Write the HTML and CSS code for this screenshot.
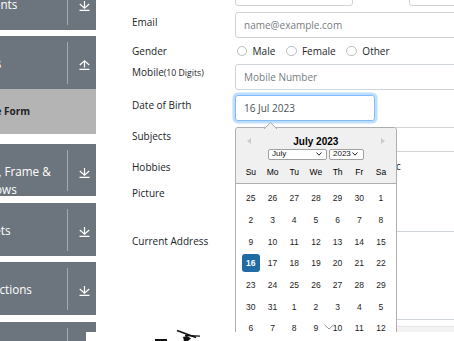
FILE: index.html
```html
<!DOCTYPE html>
<html lang="en">
<head>
<meta charset="utf-8">
<title>Practice Form</title>
<link rel="stylesheet" href="styles.css">
</head>
<body>
<div class="page">
  <aside class="sidebar">
    <div class="group">
      <div class="group-header">
        <div class="group-title">Elements</div>
        <span class="group-sep"></span>
        <div class="group-icon"><svg width="11" height="10" viewBox="0 0 11 10"><path d="M5.5 0V7M0.8 3L5.5 7.2L10.2 3M0.5 9.3H10.5" fill="none" stroke="#fff" stroke-width="1.2"/></svg></div>
      </div>
    </div>
    <div class="group group-open">
      <div class="group-header">
        <div class="group-title">Forms</div>
        <span class="group-sep"></span>
        <div class="group-icon"><svg width="11" height="10" viewBox="0 0 11 10"><path d="M5.5 0.8V7.6M0.8 5L5.5 0.8L10.2 5M0.5 9.3H10.5" fill="none" stroke="#fff" stroke-width="1.2"/></svg></div>
      </div>
      <div class="menu-item">Practice Form</div>
    </div>
    <div class="group">
      <div class="group-header">
        <div class="group-title">Alerts, Frame &amp; Windows</div>
        <span class="group-sep"></span>
        <div class="group-icon"><svg width="11" height="10" viewBox="0 0 11 10"><path d="M5.5 0V7M0.8 3L5.5 7.2L10.2 3M0.5 9.3H10.5" fill="none" stroke="#fff" stroke-width="1.2"/></svg></div>
      </div>
    </div>
    <div class="group">
      <div class="group-header">
        <div class="group-title">Widgets</div>
        <span class="group-sep"></span>
        <div class="group-icon"><svg width="11" height="10" viewBox="0 0 11 10"><path d="M5.5 0V7M0.8 3L5.5 7.2L10.2 3M0.5 9.3H10.5" fill="none" stroke="#fff" stroke-width="1.2"/></svg></div>
      </div>
    </div>
    <div class="group">
      <div class="group-header">
        <div class="group-title">Interactions</div>
        <span class="group-sep"></span>
        <div class="group-icon"><svg width="11" height="10" viewBox="0 0 11 10"><path d="M5.5 0V7M0.8 3L5.5 7.2L10.2 3M0.5 9.3H10.5" fill="none" stroke="#fff" stroke-width="1.2"/></svg></div>
      </div>
    </div>
    <div class="group">
      <div class="group-header">
        <div class="group-title">Book Store Application</div>
        <span class="group-sep"></span>
        <div class="group-icon"><svg width="11" height="10" viewBox="0 0 11 10"><path d="M5.5 0V7M0.8 3L5.5 7.2L10.2 3M0.5 9.3H10.5" fill="none" stroke="#fff" stroke-width="1.2"/></svg></div>
      </div>
    </div>
  </aside>

  <main class="form">
    <div class="row row-name">
      <label class="label">Name</label>
      <div class="controls controls-pair">
        <input class="field field-half" type="text" placeholder="First Name">
        <input class="field field-half" type="text" placeholder="Last Name">
      </div>
    </div>
    <div class="row row-email">
      <label class="label">Email</label>
      <div class="controls"><input class="field" type="text" placeholder="name@example.com"></div>
    </div>
    <div class="row row-gender">
      <label class="label label-gender">Gender</label>
      <div class="controls choices">
        <span class="choice"><span class="radio"></span>Male</span>
        <span class="choice"><span class="radio"></span>Female</span>
        <span class="choice"><span class="radio"></span>Other</span>
      </div>
    </div>
    <div class="row">
      <label class="label label-mobile">Mobile<small class="hint">(10 Digits)</small></label>
      <div class="controls"><input class="field" type="text" placeholder="Mobile Number"></div>
    </div>
    <div class="row">
      <label class="label">Date of Birth</label>
      <div class="controls"><input class="field field-date" type="text" value="16 Jul 2023"></div>
    </div>
    <div class="row row-subjects">
      <label class="label label-subjects">Subjects</label>
      <div class="controls"><div class="field field-subjects"></div></div>
    </div>
    <div class="row row-hobbies">
      <label class="label">Hobbies</label>
      <div class="controls choices">
        <span class="choice"><span class="check"></span>Sports</span>
        <span class="choice"><span class="check"></span>Reading</span>
        <span class="choice"><span class="check"></span>Music</span>
      </div>
    </div>
    <div class="row row-picture">
      <label class="label label-picture">Picture</label>
      <div class="controls file"><span class="file-btn">Choose File</span> No file chosen</div>
    </div>
    <div class="row">
      <label class="label">Current Address</label>
      <div class="controls"><textarea class="field field-area" placeholder="Current Address"></textarea></div>
    </div>
    <div class="row row-state">
      <label class="label label-state">State and City</label>
      <div class="controls controls-pair controls-state">
        <div class="field select-state"></div>
        <div class="field select-city"></div>
      </div>
    </div>
  </main>
</div>

<div class="datepicker">
  <svg class="dp-triangle" width="13" height="7" viewBox="0 0 13 7"><polygon points="0,7 6.5,0.5 13,7" fill="#f0f0f0"/><polyline points="0,7 6.5,0.5 13,7" fill="none" stroke="#aeaeae" stroke-width="1"/></svg>
  <div class="dp-header">
    <div class="dp-title-row">
      <span class="dp-nav dp-prev"></span>
      <span class="dp-title">July 2023</span>
      <span class="dp-nav dp-next"></span>
    </div>
    <div class="dp-selects">
      <span class="dp-select dp-month">July<svg width="6" height="4" viewBox="0 0 6 4"><path d="M0.5 0.5L3 3.2L5.5 0.5" fill="none" stroke="#222" stroke-width="1"/></svg></span>
      <span class="dp-select dp-year">2023<svg width="6" height="4" viewBox="0 0 6 4"><path d="M0.5 0.5L3 3.2L5.5 0.5" fill="none" stroke="#222" stroke-width="1"/></svg></span>
    </div>
    <div class="dp-grid dp-names">
      <span>Su</span><span>Mo</span><span>Tu</span><span>We</span><span>Th</span><span>Fr</span><span>Sa</span>
    </div>
  </div>
  <div class="dp-grid dp-days">
    <span>25</span><span>26</span><span>27</span><span>28</span><span>29</span><span>30</span><span>1</span>
    <span>2</span><span>3</span><span>4</span><span>5</span><span>6</span><span>7</span><span>8</span>
    <span>9</span><span>10</span><span>11</span><span>12</span><span>13</span><span>14</span><span>15</span>
    <span><b class="dp-selected">16</b></span><span>17</span><span>18</span><span>19</span><span>20</span><span>21</span><span>22</span>
    <span>23</span><span>24</span><span>25</span><span>26</span><span>27</span><span>28</span><span>29</span>
    <span>30</span><span>31</span><span>1</span><span>2</span><span>3</span><span>4</span><span>5</span>
    <span>6</span><span>7</span><span>8</span><span>9</span><span>10</span><span>11</span><span>12</span>
  </div>
</div>

<svg class="scroll-hint" width="10" height="6" viewBox="0 0 10 6"><path d="M0.5 0.8L5 5L9.5 0.8" fill="none" stroke="#8a8a8a" stroke-width="0.9"/></svg>

<div class="ad-strip">
  <svg class="ad-mark" width="56" height="13" viewBox="0 0 56 13"><path d="M5 12H17" stroke="#111" stroke-width="2"/><path d="M27 2.5L46 9.5" stroke="#111" stroke-width="1.6"/><path d="M35 7.5L50 8.2" stroke="#111" stroke-width="1.3"/><path d="M33 9L37 8L41 10.5L38 13H34Z" fill="#111"/></svg>
</div>
</body>
</html>
```

FILE: styles.css
```css
* { box-sizing: border-box; }

html, body {
  margin: 0;
  padding: 0;
  overflow: hidden;
  background: #fff;
}

body {
  width: 454px;
  height: 341px;
  position: relative;
  font-family: "Open Sans", "Noto Sans", sans-serif;
  color: #212529;
}

.page {
  display: flex;
  align-items: flex-start;
}

/* ---------- sidebar ---------- */
.sidebar {
  flex: none;
  width: 156px;
  margin-left: -60px;
  margin-top: -23px;
  display: flex;
  flex-direction: column;
  gap: 6.7px;
}

.group-open { padding-bottom: 3.3px; }

.group-header {
  height: 52.7px;
  background: #6c757d;
  display: flex;
  align-items: stretch;
  padding: 6px 0 5px;
}

.group-title {
  flex: none;
  width: 127px;
  padding: 12px 6px 0 27px;
  font-size: 11.7px;
  line-height: 18px;
  color: #fff;
  white-space: normal;
}

.group-sep {
  flex: none;
  width: 1px;
  background: #a3a8ad;
}

.group-icon {
  flex: 1;
  padding: 18px 0 0 11px;
  line-height: 0;
}

.menu-item {
  height: 44.5px;
  background: #b4b4b4;
  display: flex;
  align-items: center;
  padding-left: 21px;
  font-size: 10px;
  font-weight: 700;
  color: #1f2326;
  white-space: nowrap;
}

/* ---------- form ---------- */
.form {
  flex: none;
  width: 400px;
  margin-left: 36px;
  margin-top: -20px;
}

.row {
  display: flex;
  align-items: flex-start;
  margin-top: 5px;
}

.row-name { margin-top: 0; }
.row-email { margin-top: 6px; }
.row-subjects { margin-top: 6px; }

.label {
  flex: none;
  width: 103px;
  font-size: 10px;
  line-height: 16px;
  padding-top: 2px;
  color: #212529;
  white-space: nowrap;
}

.label-gender { padding-top: 0; }
.label-mobile { padding-top: 0; }
.label-subjects { padding-top: 1px; }
.label-picture { padding-top: 5px; }
.label-state { padding-top: 2px; }

.hint { font-size: 8.7px; }

.controls {
  flex: none;
  width: 260px;
}

.controls-pair {
  display: flex;
  gap: 56px;
}

.controls-state { gap: 10px; }

.field {
  display: block;
  width: 260px;
  height: 26px;
  margin: 0;
  border: 1px solid #ced4da;
  border-radius: 3px;
  padding: 0 8px;
  background: #fff;
  font-family: "Open Sans", "Noto Sans", sans-serif;
  font-size: 10px;
  color: #495057;
  outline: none;
}

.field::placeholder { color: #767d84; }

.field-half { width: 118px; flex: none; }

.field-date {
  width: 140px;
  border-color: #80bdff;
  box-shadow: 0 0 0 2.5px rgba(0, 123, 255, 0.25);
}

.field-subjects { height: 25px; border-color: #d4d4d4; }

.choices {
  display: flex;
  align-items: center;
  height: 16px;
  padding-left: 1.6px;
  font-size: 10px;
  line-height: 16px;
  color: #212529;
}

.row-hobbies .choices { height: 18px; }

.choice {
  display: flex;
  align-items: center;
  margin-right: 10.7px;
  white-space: nowrap;
}

.radio, .check {
  flex: none;
  width: 10.7px;
  height: 10.7px;
  margin-right: 5.3px;
  border: 1px solid #b9bfc5;
  background: #fff;
}

.radio { border-radius: 50%; }
.check { border-radius: 2.5px; }

.row-picture { height: 46px; }

.file {
  font-size: 10px;
  line-height: 16px;
  padding-top: 4px;
}

.file-btn {
  border: 1px solid #767676;
  background: #efefef;
  padding: 1px 4px;
  border-radius: 2px;
}

.field-area {
  height: 89px;
  resize: none;
  padding-top: 5px;
}

.row-state { margin-top: 6px; }

.select-state {
  width: 118px;
  flex: none;
  border-color: #cccccc;
}

.select-city {
  width: 118px;
  flex: none;
  border-color: #e6e6e6;
  background: #f2f2f2;
}

/* ---------- datepicker popup ---------- */
.datepicker {
  position: absolute;
  left: 235px;
  top: 127px;
  width: 162px;
  border: 1px solid #aeaeae;
  border-radius: 3px;
  background: #fff;
  font-family: "Liberation Sans", Arial, sans-serif;
  font-size: 8.5px;
  color: #000;
}

.dp-triangle {
  position: absolute;
  left: 28px;
  top: -6.5px;
}

.dp-header {
  background: #f0f0f0;
  border-bottom: 1px solid #aeaeae;
  border-radius: 3px 3px 0 0;
  padding: 5px 0 2px;
}

.dp-title-row {
  display: flex;
  align-items: center;
  justify-content: space-between;
  height: 16px;
  padding: 0 11px 0 10.7px;
}

.dp-title {
  font-size: 10px;
  font-weight: 700;
  color: #000;
}

.dp-nav {
  width: 0;
  height: 0;
  border-top: 3.5px solid transparent;
  border-bottom: 3.5px solid transparent;
}

.dp-prev { border-right: 4px solid #cccccc; }
.dp-next { border-left: 4px solid #cccccc; }

.dp-selects {
  display: flex;
  justify-content: center;
  gap: 2px;
  height: 10.5px;
}

.dp-select {
  display: flex;
  align-items: center;
  justify-content: space-between;
  height: 10.5px;
  padding: 0 4px 0 3px;
  border: 1px solid #a0a0a0;
  border-radius: 2px;
  background: #fff;
  font-size: 8px;
  line-height: 8px;
  color: #111;
}

.dp-month { width: 59px; }
.dp-year { width: 35px; padding-right: 5px; }

.dp-grid {
  display: grid;
  grid-template-columns: repeat(7, 21.7px);
  padding: 0 4px;
}

.dp-names {
  margin-top: 3px;
}

.dp-grid span {
  display: flex;
  align-items: center;
  justify-content: center;
  height: 18px;
}

.dp-days {
  padding-top: 4px;
  padding-bottom: 4px;
  color: #1c1c1c;
}

.dp-days span { height: 21.7px; }

.dp-selected {
  display: flex;
  align-items: center;
  justify-content: center;
  width: 18px;
  height: 18px;
  border-radius: 3px;
  background: #216ba5;
  color: #fff;
  font-weight: 700;
}

/* ---------- overlays ---------- */
.scroll-hint {
  position: absolute;
  left: 324px;
  top: 324px;
}

.ad-strip {
  position: absolute;
  left: 86px;
  top: 332px;
  width: 368px;
  height: 12px;
  background: #fff;
}

.ad-mark {
  position: absolute;
  left: 64px;
  top: -4px;
}
```
